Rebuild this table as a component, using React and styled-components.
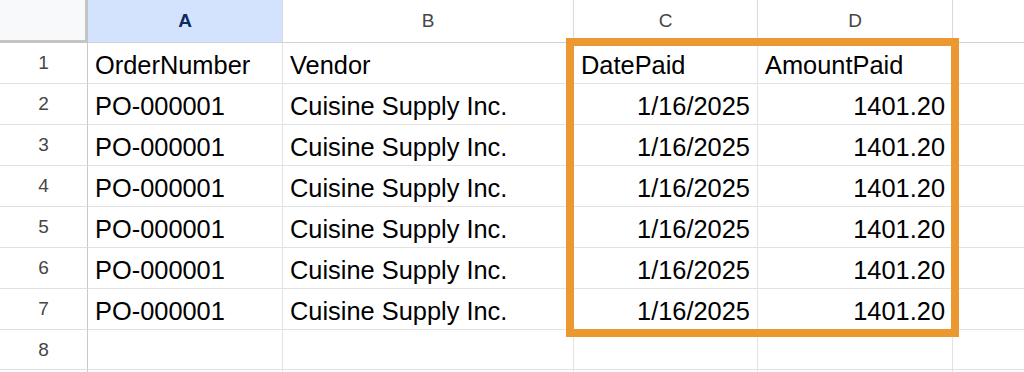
import React from "react";
import styled, { createGlobalStyle } from "styled-components";

const Global = createGlobalStyle`
  html, body { margin: 0; padding: 0; background: #ffffff; }
  body { width: 1024px; height: 372px; overflow: hidden; font-family: "Liberation Sans", Arial, sans-serif; }
`;

const Sheet = styled.div`
  position: relative;
  width: 1024px;
  height: 372px;
  overflow: hidden;
  background: #ffffff;
`;

const Grid = styled.div`
  display: grid;
  grid-template-columns: 88px 195px 291px 184px 195px 120px;
  grid-template-rows: 43px repeat(7, 41px) 40px 41px;
`;

const Corner = styled.div`
  box-sizing: border-box;
  background: #f8f9fa;
  border-right: 3px solid #c4c4c4;
  border-bottom: 3px solid #c4c4c4;
`;

const ColHead = styled.div`
  box-sizing: border-box;
  display: flex;
  align-items: center;
  justify-content: center;
  background: ${(p) => (p.$selected ? "#d3e3fd" : "#ffffff")};
  color: ${(p) => (p.$selected ? "#0b2a63" : "#444746")};
  font-family: "Liberation Sans", Arial, sans-serif;
  font-weight: ${(p) => (p.$selected ? 700 : 400)};
  font-size: 19px;
  border-right: 1px solid #dadada;
  border-bottom: 1px solid #d0d0d0;
`;

const RowHead = styled.div`
  box-sizing: border-box;
  display: flex;
  align-items: center;
  justify-content: center;
  background: #ffffff;
  color: #444746;
  font-family: "Liberation Sans", Arial, sans-serif;
  font-size: 19px;
  border-right: 1px solid #c8c8c8;
  border-bottom: 1px solid #e0e0e0;
`;

const Cell = styled.div`
  box-sizing: border-box;
  display: flex;
  align-items: flex-end;
  justify-content: ${(p) => (p.$right ? "flex-end" : "flex-start")};
  padding: 0 7px 3px 7px;
  color: #000000;
  font-family: "Liberation Sans", Arial, sans-serif;
  font-size: 25.4px;
  line-height: normal;
  white-space: nowrap;
  overflow: hidden;
  border-right: 1px solid #e2e2e2;
  border-bottom: 1px solid #e2e2e2;
`;

const Highlight = styled.div`
  position: absolute;
  left: 566px;
  top: 38px;
  width: 393px;
  height: 299px;
  box-sizing: border-box;
  border: 8px solid #ea982f;
  pointer-events: none;
`;

const columns = ["A", "B", "C", "D", ""];
const rows = [
  ["OrderNumber", "Vendor", "DatePaid", "AmountPaid", ""],
  ...Array.from({ length: 6 }, () => [
    "PO-000001",
    "Cuisine Supply Inc.",
    "1/16/2025",
    "1401.20",
    "",
  ]),
  ["", "", "", "", ""],
  ["", "", "", "", ""],
];

export default function App() {
  return (
    <>
      <Global />
      <Sheet>
        <Grid>
          <Corner />
          {columns.map((c, i) => (
            <ColHead key={i} $selected={c === "A"}>
              {c}
            </ColHead>
          ))}
          {rows.map((r, ri) => (
            <React.Fragment key={ri}>
              <RowHead>{ri < 8 ? ri + 1 : ""}</RowHead>
              {r.map((v, ci) => (
                <Cell key={ci} $right={ri > 0 && (ci === 2 || ci === 3)}>
                  {v}
                </Cell>
              ))}
            </React.Fragment>
          ))}
        </Grid>
        <Highlight />
      </Sheet>
    </>
  );
}
